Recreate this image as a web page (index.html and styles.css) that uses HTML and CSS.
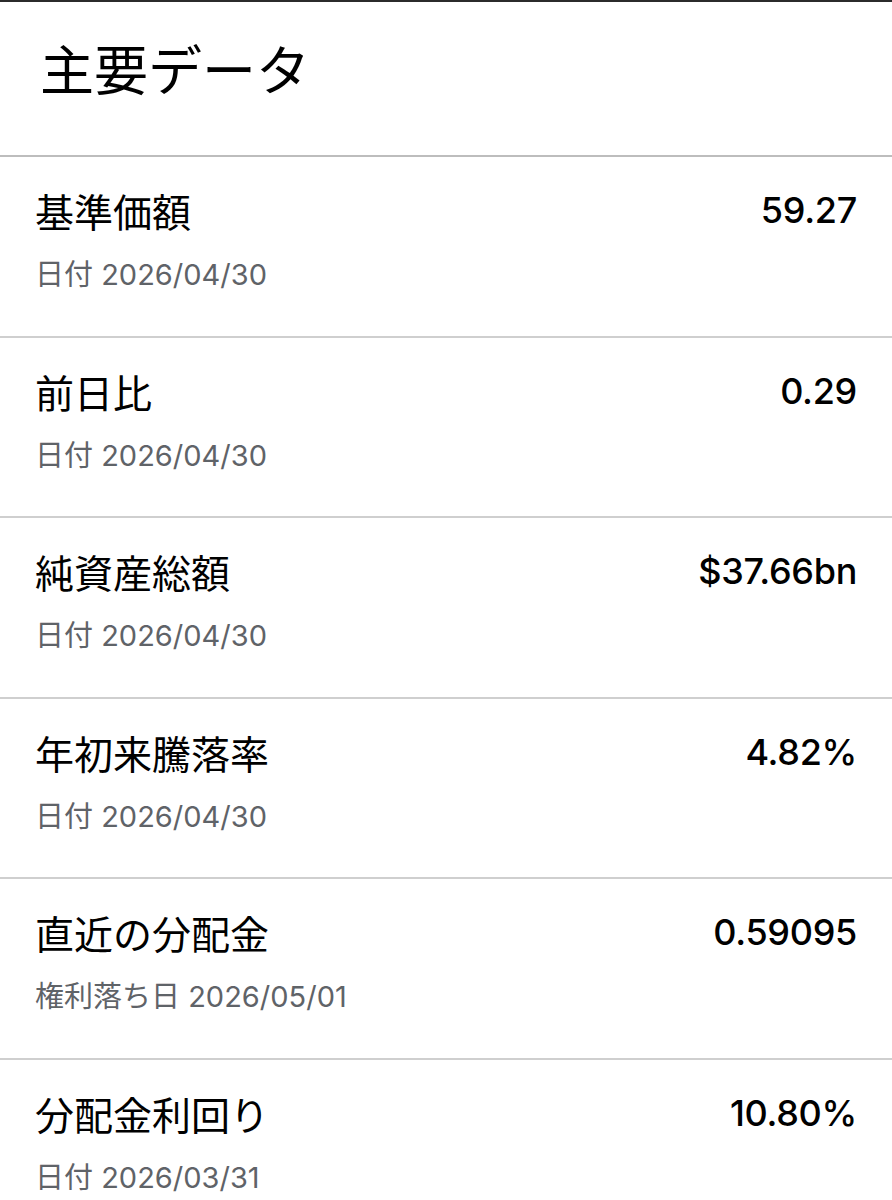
FILE: index.html
```html
<!DOCTYPE html>
<html lang="ja">
<head>
  <meta charset="UTF-8">
  <meta name="viewport" content="width=device-width, initial-scale=1.0">
  <title>主要データ</title>
  <link rel="stylesheet" href="styles.css">
</head>
<body>
  <div class="panel">
    <h2 class="panel-title">主要データ</h2>

    <div class="stat-row">
      <div class="stat-main">
        <span class="stat-label">基準価額</span>
        <span class="stat-value">59.27</span>
      </div>
      <div class="stat-sub">日付 2026/04/30</div>
    </div>

    <div class="stat-row">
      <div class="stat-main">
        <span class="stat-label">前日比</span>
        <span class="stat-value">0.29</span>
      </div>
      <div class="stat-sub">日付 2026/04/30</div>
    </div>

    <div class="stat-row">
      <div class="stat-main">
        <span class="stat-label">純資産総額</span>
        <span class="stat-value">$37.66bn</span>
      </div>
      <div class="stat-sub">日付 2026/04/30</div>
    </div>

    <div class="stat-row">
      <div class="stat-main">
        <span class="stat-label">年初来騰落率</span>
        <span class="stat-value">4.82%</span>
      </div>
      <div class="stat-sub">日付 2026/04/30</div>
    </div>

    <div class="stat-row">
      <div class="stat-main">
        <span class="stat-label">直近の分配金</span>
        <span class="stat-value">0.59095</span>
      </div>
      <div class="stat-sub">権利落ち日 2026/05/01</div>
    </div>

    <div class="stat-row">
      <div class="stat-main">
        <span class="stat-label">分配金利回り</span>
        <span class="stat-value">10.80%</span>
      </div>
      <div class="stat-sub">日付 2026/03/31</div>
    </div>
  </div>
</body>
</html>
```

FILE: styles.css
```css
* {
  box-sizing: border-box;
  margin: 0;
  padding: 0;
}

body {
  background: #fff;
  font-family: 'Inter', 'Noto Sans CJK JP', sans-serif;
  color: #000;
}

.panel {
  border-top: 2px solid #2b2b2b;
}

.panel-title {
  font-family: 'Noto Sans CJK JP', sans-serif;
  font-size: 54px;
  font-weight: 400;
  line-height: 60px;
  padding: 36px 40px 57px;
  border-bottom: 2px solid #bdbdbd;
}

.stat-row {
  padding: 28px 35px 42.5px;
  border-bottom: 2px solid #cfcfcf;
}

.stat-main {
  display: flex;
  justify-content: space-between;
  align-items: center;
  height: 50px;
}

.stat-label {
  font-family: 'Noto Sans CJK JP', sans-serif;
  font-size: 39px;
  font-weight: 400;
}

.stat-value {
  font-size: 36px;
  font-weight: 500;
  letter-spacing: -0.3px;
}

.stat-sub {
  margin-top: 22px;
  line-height: 36px;
  font-size: 29px;
  color: #5f6368;
}
```
